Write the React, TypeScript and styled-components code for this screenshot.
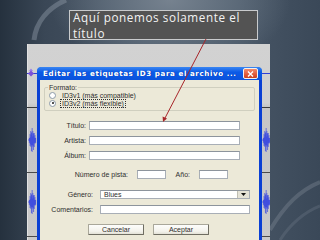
import React from 'react';
import styled, { createGlobalStyle } from 'styled-components';

const GlobalStyle = createGlobalStyle`
  html, body {
    margin: 0;
    padding: 0;
    background: #2f3d4c;
  }
`;

const Slide = styled.div`
  position: relative;
  width: 320px;
  height: 240px;
  overflow: hidden;
  padding-top: 10px;
  box-sizing: border-box;
  background:
    radial-gradient(ellipse 120px 75px at 170px 0px, #76828f 0%, rgba(106, 120, 134, 0.6) 55%, rgba(90, 104, 118, 0) 100%),
    linear-gradient(90deg, #25313e 0%, #3a4756 14%, #4a5767 45%, #485666 75%, #3a4858 100%);
`;

const Swoosh = styled.svg`
  position: absolute;
  left: 0;
  top: 0;
  pointer-events: none;
`;

const Callout = styled.div`
  position: relative;
  margin-left: 69px;
  width: 184px;
  height: 28px;
  padding: 0 0 0 3px;
  background: #535353;
  border: 1px solid #c9cbcd;
  color: #f2f2f2;
  font-family: 'Open Sans', 'Lato', sans-serif;
  font-size: 11.7px;
  line-height: 16px;
  letter-spacing: 0.6px;
  white-space: nowrap;
`;

const CalloutText = styled.div`
  margin-top: -2px;
`;

const Panel = styled.div`
  position: relative;
  margin: 4px 0 0 27px;
  width: 243px;
  height: 196px;
  overflow: hidden;
  background: linear-gradient(180deg, #d2d2d2 0%, #d0d0d0 30%, #c6c6c6 32%, #c9c9c9 100%);
  padding: 23px 0 0 10px;
  box-sizing: border-box;
`;

const TrackArt = styled.svg`
  position: absolute;
  left: 0;
  top: 0;
`;

const Dialog = styled.div`
  position: relative;
  width: 225px;
  height: 190px;
  box-sizing: border-box;
  padding: 0 3px 3px;
  border-radius: 5px 5px 0 0;
  background: linear-gradient(90deg, #0a3fd4 0%, #0c4de0 50%, #0a3fd4 100%);
`;

const TitleBar = styled.div`
  display: flex;
  align-items: center;
  justify-content: space-between;
  height: 13px;
  background: linear-gradient(180deg, #3a86f2 0%, #0b5ae6 40%, #0a52dc 100%);
  border-radius: 4px 4px 0 0;
  margin: 0 -3px;
  padding-left: 6px;
  padding-right: 4px;
`;

const TitleText = styled.span`
  color: #ffffff;
  font-family: 'DejaVu Sans', sans-serif;
  font-weight: bold;
  font-size: 7.2px;
  letter-spacing: 0.55px;
  white-space: nowrap;
  text-shadow: 1px 0 0 rgba(0, 0, 60, 0.35);
`;

const CloseButton = styled.div`
  display: flex;
  align-items: center;
  justify-content: center;
  width: 13px;
  height: 9px;
  border: 1px solid #f3f3f3;
  border-radius: 2px;
  background: linear-gradient(180deg, #f08a6c 0%, #e05a3a 60%, #c8421f 100%);
`;

const Body = styled.div`
  height: 100%;
  background: #ece9d8;
  padding-top: 4px;
  box-sizing: border-box;
  font-family: 'Liberation Sans', Arial, sans-serif;
  font-size: 7px;
  color: #2e2e2e;
`;

const Group = styled.fieldset`
  margin: 0 4px;
  padding: 0 0 0 4px;
  height: 25px;
  border: 1px solid #d0cfbf;
  border-radius: 2px;
`;

const Legend = styled.legend`
  padding: 0 1px;
  margin-left: -1px;
  font-size: 7px;
  color: #2e2e2e;
`;

const RadioRow = styled.div`
  display: flex;
  align-items: center;
  height: 8px;
`;

const RadioDot = styled.span<{ $checked?: boolean }>`
  position: relative;
  width: 5px;
  height: 5px;
  border-radius: 50%;
  border: 1px solid #8c9aa8;
  background: #ffffff;
  margin-right: 5px;
  &::after {
    content: '';
    display: ${(p) => (p.$checked ? 'block' : 'none')};
    position: absolute;
    left: 1.5px;
    top: 1.5px;
    width: 2px;
    height: 2px;
    border-radius: 50%;
    background: #1a1a1a;
  }
`;

const RadioLabel = styled.span<{ $focused?: boolean }>`
  padding: 0 1px;
  outline: ${(p) => (p.$focused ? '1px dotted #333' : 'none')};
  line-height: 7px;
`;

const Row = styled.div<{ $top: number }>`
  display: flex;
  align-items: center;
  height: 9px;
  margin-top: ${(p) => p.$top}px;
`;

const Label = styled.span<{ $width: number; $gap: number }>`
  width: ${(p) => p.$width}px;
  margin-right: ${(p) => p.$gap}px;
  text-align: right;
  white-space: nowrap;
`;

const Field = styled.div<{ $width: number }>`
  display: flex;
  justify-content: space-between;
  align-items: center;
  width: ${(p) => p.$width}px;
  height: 9px;
  box-sizing: border-box;
  background: #ffffff;
  border: 1px solid #a8aeb6;
  border-top-color: #8d949c;
  padding-left: 3px;
  line-height: 7px;
`;

const DropButton = styled.span`
  display: flex;
  align-items: center;
  justify-content: center;
  width: 11px;
  height: 7px;
  background: #e4e2d6;
  border-left: 1px solid #c0bfb3;
`;

const Buttons = styled.div`
  display: flex;
  gap: 9px;
  margin: 10px 0 0 48px;
`;

const Button = styled.div`
  display: flex;
  align-items: center;
  justify-content: center;
  width: 56px;
  height: 11px;
  box-sizing: border-box;
  border: 1px solid #a9a79a;
  border-right-color: #6f6d62;
  border-bottom-color: #6f6d62;
  border-radius: 1px;
  background: linear-gradient(180deg, #fdfdfb 0%, #f3f2ec 70%, #e3e1d6 100%);
`;

const Arrow = styled.svg`
  position: absolute;
  left: 0;
  top: 0;
  pointer-events: none;
`;

const Wave = ({ x, y }: { x: number; y: number }) => {
  const amps = [1, 3, 2, 6, 4, 9, 5, 11, 7, 12, 5, 9, 6, 10, 4, 7, 3, 5, 2, 3];
  const d = amps
    .map((a, i) => {
      const px = x + i * 0.35;
      return `M${px} ${y - a * (i % 3 === 1 ? 0.7 : 1)} L${px} ${y + a * (i % 3 === 2 ? 0.75 : 1)}`;
    })
    .join(' ');
  return <path d={d} stroke="#3a48e0" strokeWidth={0.7} fill="none" />;
};

export default function App() {
  return (
    <>
      <GlobalStyle />
      <Slide>
        <Swoosh width={320} height={240} viewBox="0 0 320 240">
          <path d="M34 40 C 36 22, 48 8, 66 0" stroke="#8f9aa6" strokeWidth={5} fill="none" opacity={0.45} />
          <path d="M270 230 C 285 205, 300 190, 320 182" stroke="#7c8794" strokeWidth={4} fill="none" opacity={0.4} />
          <path d="M280 240 C 292 222, 305 212, 320 206" stroke="#6d7987" strokeWidth={3} fill="none" opacity={0.35} />
        </Swoosh>

        <Callout>
          <CalloutText>
            Aquí ponemos solamente el
            <br />
            título
          </CalloutText>
        </Callout>

        <Panel>
          <TrackArt width={243} height={196} viewBox="0 0 243 196">
            <rect x={0} y={0} width={1} height={196} fill="#e2e2e2" />
            <line x1={0} y1={63.5} x2={243} y2={63.5} stroke="#3a3a3a" strokeWidth={1} />
            <line x1={0} y1={128.5} x2={243} y2={128.5} stroke="#4a4a4a" strokeWidth={1} />
            <line x1={0} y1={192.5} x2={243} y2={192.5} stroke="#4a4a4a" strokeWidth={1} />
            <line x1={0} y1={29.5} x2={243} y2={29.5} stroke="#2e3fd8" strokeWidth={1} />
            <path d="M1 29.5 L4 26.5 L7 29.5 L4 32.5 Z" fill="#7a52d8" />
            <path d="M2 27 L4 24.5 L6 27 Z" fill="#9a7ae8" />
            <Wave x={2} y={96} />
            <Wave x={2} y={158} />
            <Wave x={236} y={96} />
            <Wave x={236} y={158} />
          </TrackArt>

          <Dialog>
            <TitleBar>
              <TitleText>Editar las etiquetas ID3 para el archivo ...</TitleText>
              <CloseButton>
                <svg width={7} height={6} viewBox="0 0 7 6">
                  <path d="M1 0.5 L6 5.5 M6 0.5 L1 5.5" stroke="#ffffff" strokeWidth={1.4} />
                </svg>
              </CloseButton>
            </TitleBar>
            <Body>
              <Group>
                <Legend>Formato:</Legend>
                <RadioRow>
                  <RadioDot />
                  <RadioLabel>ID3v1 (más compatible)</RadioLabel>
                </RadioRow>
                <RadioRow>
                  <RadioDot $checked />
                  <RadioLabel $focused>ID3v2 (más flexible)</RadioLabel>
                </RadioRow>
              </Group>

              <Row $top={10}>
                <Label $width={46} $gap={3}>Título:</Label>
                <Field $width={151} />
              </Row>
              <Row $top={6}>
                <Label $width={46} $gap={3}>Artista:</Label>
                <Field $width={151} />
              </Row>
              <Row $top={6}>
                <Label $width={46} $gap={3}>Álbum:</Label>
                <Field $width={151} />
              </Row>

              <Row $top={10}>
                <Label $width={88} $gap={9}>Número de pista:</Label>
                <Field $width={29} />
                <Label $width={24} $gap={9}>Año:</Label>
                <Field $width={29} />
              </Row>

              <Row $top={11}>
                <Label $width={53} $gap={7}>Género:</Label>
                <Field $width={150}>
                  Blues
                  <DropButton>
                    <svg width={5} height={3} viewBox="0 0 5 3">
                      <path d="M0 0 L5 0 L2.5 3 Z" fill="#111" />
                    </svg>
                  </DropButton>
                </Field>
              </Row>
              <Row $top={6}>
                <Label $width={53} $gap={7}>Comentarios:</Label>
                <Field $width={150} />
              </Row>

              <Buttons>
                <Button>Cancelar</Button>
                <Button>Aceptar</Button>
              </Buttons>
            </Body>
          </Dialog>
        </Panel>

        <Arrow width={320} height={240} viewBox="0 0 320 240">
          <line x1={206} y1={39} x2={164.5} y2={119} stroke="#a8262a" strokeWidth={1} />
          <path d="M163 122 L162.6 116.5 L167 118.6 Z" fill="#a8262a" />
        </Arrow>
      </Slide>
    </>
  );
}
